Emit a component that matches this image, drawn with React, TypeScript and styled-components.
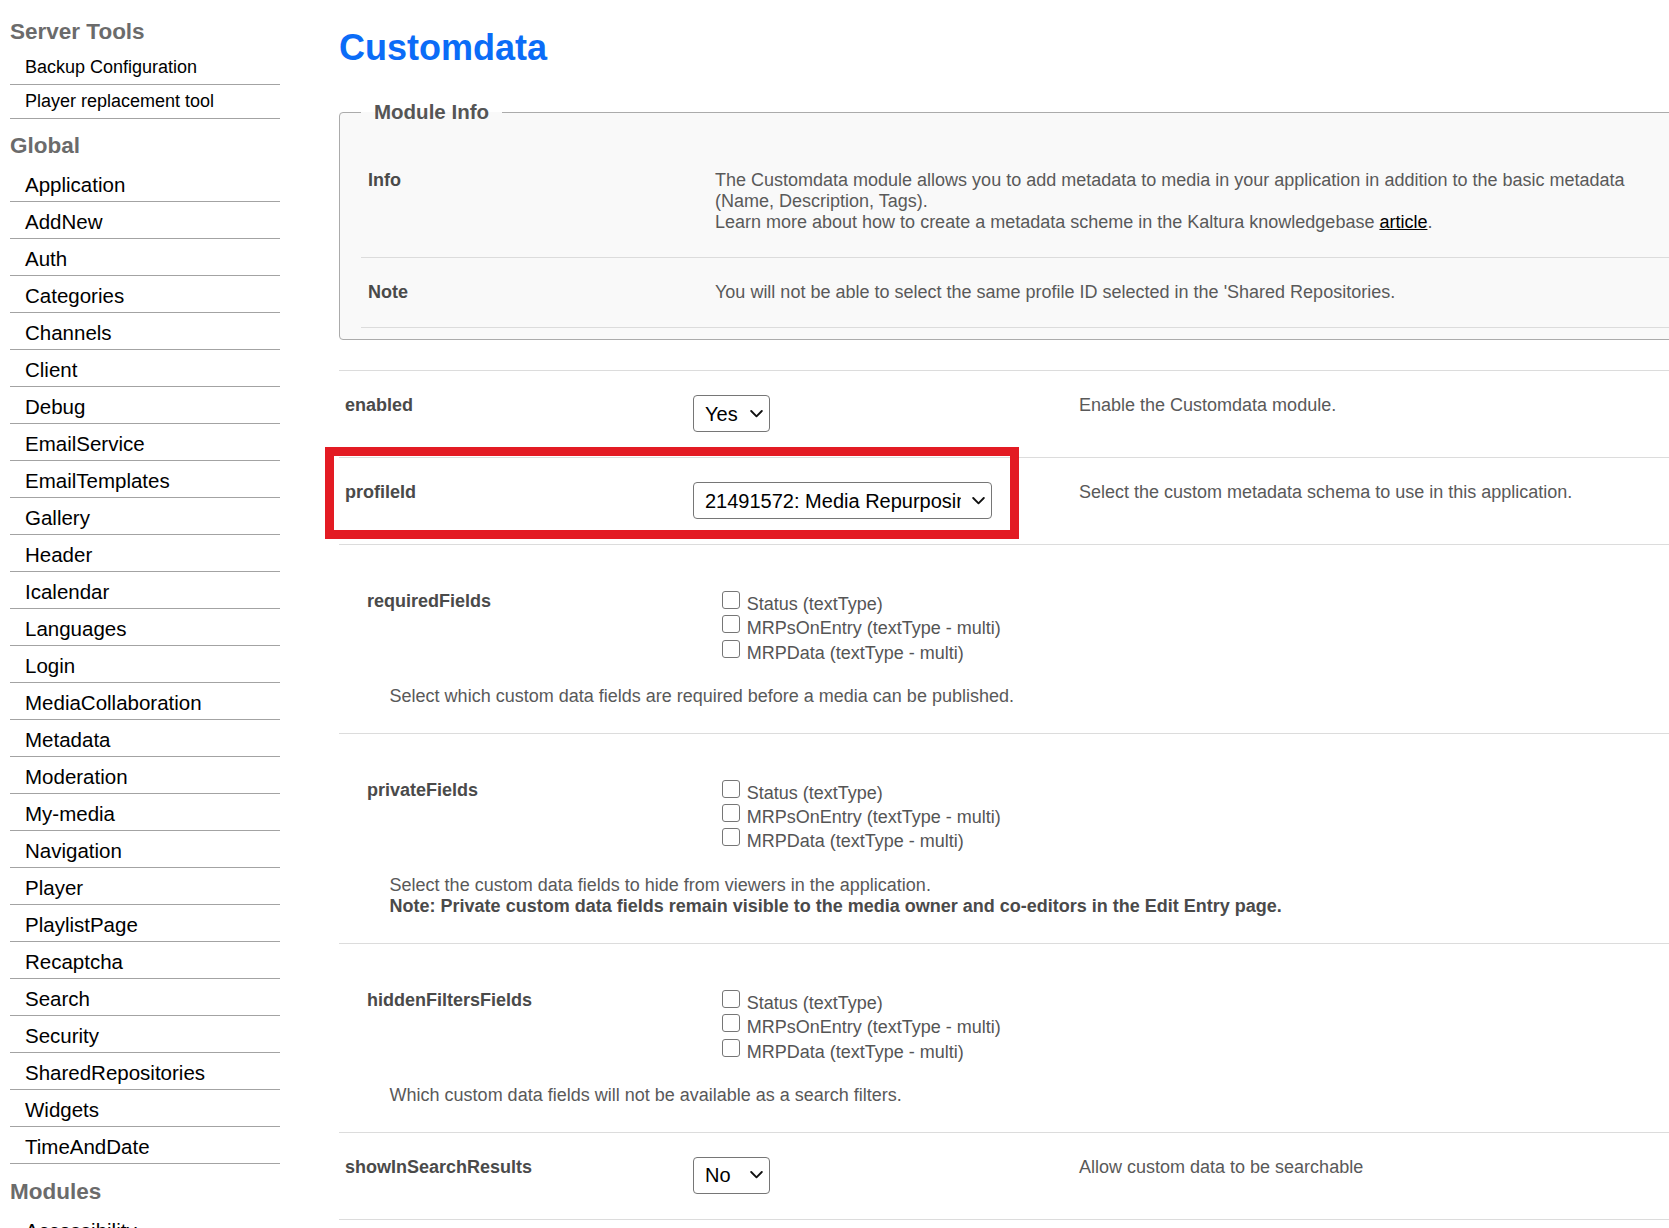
import React from 'react';
import styled, { createGlobalStyle } from 'styled-components';

const GlobalStyle = createGlobalStyle`
  html, body {
    margin: 0;
    padding: 0;
    overflow: hidden;
    background: #fff;
  }
  body {
    font-family: "Liberation Sans", Arial, Helvetica, sans-serif;
    color: #000;
  }
  * {
    box-sizing: border-box;
  }
`;

const serverTools = ['Backup Configuration', 'Player replacement tool'];

const globalModules = [
    'Application', 'AddNew', 'Auth', 'Categories', 'Channels', 'Client', 'Debug',
    'EmailService', 'EmailTemplates', 'Gallery', 'Header', 'Icalendar', 'Languages',
    'Login', 'MediaCollaboration', 'Metadata', 'Moderation', 'My-media', 'Navigation',
    'Player', 'PlaylistPage', 'Recaptcha', 'Search', 'Security', 'SharedRepositories',
    'Widgets', 'TimeAndDate',
];

const modules = ['Accessibility', 'Addcontent', 'Analytics'];

const customFields = ['Status (textType)', 'MRPsOnEntry (textType - multi)', 'MRPData (textType - multi)'];

const Page = styled.div`
    display: flex;
    align-items: flex-start;
    width: 1800px;
`;

/* left navigation */
const Sidebar = styled.nav`
    flex: 0 0 270px;
    margin-left: 10px;
`;

const NavHeading = styled.h3<{ $top: number }>`
    margin: ${(p) => p.$top}px 0 6px;
    font-size: 22.5px;
    line-height: 26px;
    font-weight: bold;
    color: #6b6b6b;
`;

const NavList = styled.ul`
    margin: 0;
    padding: 0;
    list-style: none;
`;

const NavItem = styled.li<{ $compact?: boolean }>`
    padding: ${(p) => (p.$compact ? '6px 0 6px 15px' : '8px 0 4px 15px')};
    font-size: ${(p) => (p.$compact ? '18px' : '20.5px')};
    line-height: ${(p) => (p.$compact ? '21px' : '24px')};
    border-bottom: 1px solid #a3a3a3;
    color: #000;
    white-space: nowrap;
`;

/* main column */
const Main = styled.main`
    flex: 0 0 1400px;
    margin-left: 59px;
`;

const Title = styled.h1`
    margin: 27px 0 31px;
    font-size: 36px;
    line-height: 42px;
    font-weight: bold;
    color: #0b6cf7;
`;

const InfoBox = styled.fieldset`
    margin: 0;
    min-width: 0;
    padding: 22px 0 11px 21px;
    border: 1px solid #ababab;
    border-radius: 4px;
    background: #f9f9f9;
`;

const InfoLegend = styled.legend`
    padding: 0 13px;
    font-size: 20.5px;
    line-height: 24px;
    font-weight: bold;
    color: #555;
`;

const InfoRow = styled.div`
    display: grid;
    grid-template-columns: 347px 1fr;
    padding: 24px 0;
    border-bottom: 1px solid #dcdcdc;
    font-size: 18px;
    line-height: 21px;
`;

const InfoLabel = styled.div`
    padding-left: 7px;
    font-weight: bold;
    color: #4a4a4a;
`;

const InfoValue = styled.div`
    padding-left: 7px;
    max-width: 952px;
    color: #595959;

    a {
        color: #000;
        text-decoration: underline;
    }
`;

const Settings = styled.div`
    margin-top: 30px;
    border-top: 1px solid #dcdcdc;
`;

const SettingRow = styled.div`
    position: relative;
    display: grid;
    grid-template-columns: 354px 386px 1fr;
    align-items: start;
    padding: 24px 0 25px;
    border-bottom: 1px solid #dcdcdc;
    font-size: 18px;
`;

const FieldLabel = styled.div`
    padding-left: 6px;
    font-weight: bold;
    line-height: 20px;
    color: #4a4a4a;
`;

const FieldHint = styled.div`
    line-height: 20px;
    color: #595959;
`;

/* red frame drawn around the row being pointed out */
const Highlight = styled.div`
    position: absolute;
    top: -11px;
    left: -14px;
    width: 694px;
    height: 92px;
    border: 9px solid #e31b23;
    pointer-events: none;
`;

const Dropdown = styled.div<{ $width: number }>`
    position: relative;
    width: ${(p) => p.$width}px;
    height: 37px;

    svg {
        position: absolute;
        right: 7px;
        top: 50%;
        transform: translateY(-50%);
        pointer-events: none;
    }
`;

const DropdownSelect = styled.select`
    appearance: none;
    width: 100%;
    height: 100%;
    margin: 0;
    padding: 0 30px 0 11px;
    border: 1px solid #767676;
    border-radius: 4px;
    background: #fff;
    font-family: "Liberation Sans", Arial, sans-serif;
    font-size: 20px;
    color: #000;
    outline: none;
`;

const CheckRow = styled.div`
    padding: 45px 0 25px 28px;
    border-bottom: 1px solid #dcdcdc;
    font-size: 18px;
`;

const CheckGrid = styled.div`
    display: grid;
    grid-template-columns: 354.7px 1fr;
    align-items: start;
`;

const CheckLabel = styled.div`
    font-weight: bold;
    line-height: 22px;
    color: #4a4a4a;
`;

const CheckList = styled.div`
    display: flex;
    flex-direction: column;
    margin-top: 2px;
`;

const CheckItem = styled.label`
    display: flex;
    align-items: flex-start;
    height: 24.4px;
    line-height: 24.4px;
    color: #555;
    white-space: nowrap;
`;

const CheckBox = styled.input`
    appearance: none;
    flex: none;
    width: 18px;
    height: 18px;
    margin: -1px 7px 0 0;
    border: 1px solid #767676;
    border-radius: 3px;
    background: #fff;
`;

const CheckHint = styled.div`
    margin: 21px 0 0 22.6px;
    line-height: 21.5px;
    color: #595959;

    strong {
        color: #4a4a4a;
    }
`;

const Chevron = () => (
    <svg width="13" height="9" viewBox="0 0 13 9" fill="none">
        <polyline points="1.2,1.5 6.5,6.8 11.8,1.5" stroke="#111" strokeWidth="1.9" strokeLinecap="round" strokeLinejoin="round" />
    </svg>
);

const Select = ({ width, value }: { width: number; value: string }) => (
    <Dropdown $width={width}>
        <DropdownSelect defaultValue={value}>
            <option value={value}>{value}</option>
        </DropdownSelect>
        <Chevron />
    </Dropdown>
);

const FieldChecks = ({ name, children }: { name: string; children: React.ReactNode }) => (
    <CheckRow>
        <CheckGrid>
            <CheckLabel>{name}</CheckLabel>
            <CheckList>
                {customFields.map((field) => (
                    <CheckItem key={field}>
                        <CheckBox type="checkbox" />
                        {field}
                    </CheckItem>
                ))}
            </CheckList>
        </CheckGrid>
        <CheckHint>{children}</CheckHint>
    </CheckRow>
);

const App = () => {
    return (
        <>
            <GlobalStyle />
            <Page>
                <Sidebar>
                    <NavHeading $top={19}>Server Tools</NavHeading>
                    <NavList>
                        {serverTools.map((item) => (
                            <NavItem key={item} $compact>
                                {item}
                            </NavItem>
                        ))}
                    </NavList>
                    <NavHeading $top={14}>Global</NavHeading>
                    <NavList>
                        {globalModules.map((item) => (
                            <NavItem key={item}>{item}</NavItem>
                        ))}
                    </NavList>
                    <NavHeading $top={15}>Modules</NavHeading>
                    <NavList>
                        {modules.map((item) => (
                            <NavItem key={item}>{item}</NavItem>
                        ))}
                    </NavList>
                </Sidebar>

                <Main>
                    <Title>Customdata</Title>

                    <InfoBox>
                        <InfoLegend>Module Info</InfoLegend>
                        <InfoRow>
                            <InfoLabel>Info</InfoLabel>
                            <InfoValue>
                                The Customdata module allows you to add metadata to media in your application in addition to the basic metadata (Name, Description, Tags).
                                <br />
                                Learn more about how to create a metadata scheme in the Kaltura knowledgebase <a href="#">article</a>.
                            </InfoValue>
                        </InfoRow>
                        <InfoRow>
                            <InfoLabel>Note</InfoLabel>
                            <InfoValue>
                                You will not be able to select the same profile ID selected in the 'Shared Repositories.
                            </InfoValue>
                        </InfoRow>
                    </InfoBox>

                    <Settings>
                        <SettingRow>
                            <FieldLabel>enabled</FieldLabel>
                            <Select width={77} value="Yes" />
                            <FieldHint>Enable the Customdata module.</FieldHint>
                        </SettingRow>

                        <SettingRow>
                            <FieldLabel>profileId</FieldLabel>
                            <Select width={299} value="21491572: Media Repurposing" />
                            <FieldHint>Select the custom metadata schema to use in this application.</FieldHint>
                            <Highlight />
                        </SettingRow>

                        <FieldChecks name="requiredFields">
                            Select which custom data fields are required before a media can be published.
                        </FieldChecks>

                        <FieldChecks name="privateFields">
                            Select the custom data fields to hide from viewers in the application.
                            <br />
                            <strong>Note: Private custom data fields remain visible to the media owner and co-editors in the Edit Entry page.</strong>
                        </FieldChecks>

                        <FieldChecks name="hiddenFiltersFields">
                            Which custom data fields will not be available as a search filters.
                        </FieldChecks>

                        <SettingRow>
                            <FieldLabel>showInSearchResults</FieldLabel>
                            <Select width={77} value="No" />
                            <FieldHint>Allow custom data to be searchable</FieldHint>
                        </SettingRow>
                    </Settings>
                </Main>
            </Page>
        </>
    );
};

export default App;
